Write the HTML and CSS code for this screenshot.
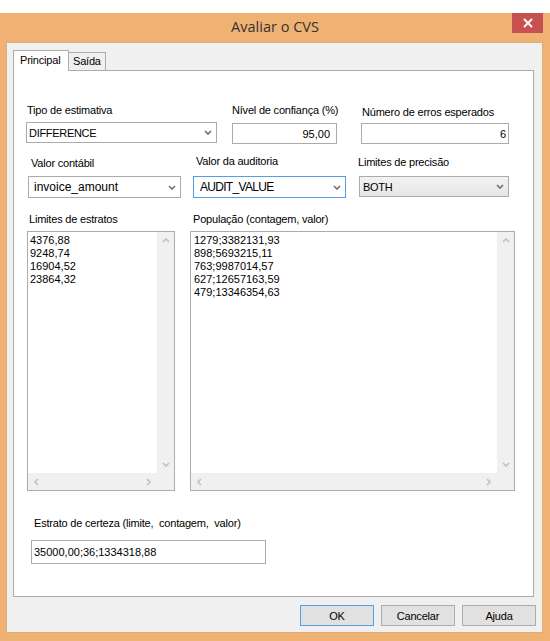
FILE: index.html
```html
<!DOCTYPE html>
<html lang="pt">
<head>
<meta charset="utf-8">
<title>Avaliar o CVS</title>
<link rel="stylesheet" href="styles.css">
</head>
<body>
<div class="topgap"></div>
<div class="window">
  <div class="titlebar">
    <div class="title">Avaliar o CVS</div>
    <div class="close">
      <svg width="10" height="10" viewBox="0 0 10 10"><path d="M1 1 L9 9 M9 1 L1 9" stroke="#fff" stroke-width="1.8" fill="none"/></svg>
    </div>
  </div>
  <div class="client">
    <div class="tabs">
      <div class="tab active">Principal</div>
      <div class="tab">Saída</div>
    </div>
    <div class="panel">
      <div class="row r1">
        <div class="field f1">
          <div class="label">Tipo de estimativa</div>
          <div class="combo c1"><span class="val v-caps">DIFFERENCE</span><span class="arrow"><svg width="8" height="5" viewBox="0 0 8 5"><path d="M1 1 L4 4 L7 1" stroke="#6d6d6d" stroke-width="1.6" fill="none"/></svg></span></div>
        </div>
        <div class="field f2">
          <div class="label">Nível de confiança (%)</div>
          <div class="input num n1">95,00</div>
        </div>
        <div class="field f3">
          <div class="label">Número de erros esperados</div>
          <div class="input num n2">6</div>
        </div>
      </div>
      <div class="row r2">
        <div class="field g1">
          <div class="label">Valor contábil</div>
          <div class="combo c2"><span class="val v-big">invoice_amount</span><span class="arrow"><svg width="8" height="5" viewBox="0 0 8 5"><path d="M1 1 L4 4 L7 1" stroke="#6d6d6d" stroke-width="1.6" fill="none"/></svg></span></div>
        </div>
        <div class="field g2">
          <div class="label">Valor da auditoria</div>
          <div class="combo c2 focus"><span class="val v-audit">AUDIT_VALUE</span><span class="arrow"><svg width="8" height="5" viewBox="0 0 8 5"><path d="M1 1 L4 4 L7 1" stroke="#6d6d6d" stroke-width="1.6" fill="none"/></svg></span></div>
        </div>
        <div class="field g3">
          <div class="label">Limites de precisão</div>
          <div class="combo c3 readonly"><span class="val v-caps">BOTH</span><span class="arrow"><svg width="8" height="5" viewBox="0 0 8 5"><path d="M1 1 L4 4 L7 1" stroke="#6d6d6d" stroke-width="1.6" fill="none"/></svg></span></div>
        </div>
      </div>
      <div class="row r3">
        <div class="field h1">
          <div class="label">Limites de estratos</div>
          <div class="listbox">
            <div class="items">
              <div>4376,88</div>
              <div>9248,74</div>
              <div>16904,52</div>
              <div>23864,32</div>
            </div>
            <div class="vscroll">
              <span class="sbtn"><svg width="8" height="5" viewBox="0 0 8 5"><path d="M1 4 L4 1 L7 4" stroke="#c2c2c2" stroke-width="1.7" fill="none"/></svg></span>
              <span class="sbtn"><svg width="8" height="5" viewBox="0 0 8 5"><path d="M1 1 L4 4 L7 1" stroke="#c2c2c2" stroke-width="1.7" fill="none"/></svg></span>
            </div>
            <div class="hscroll">
              <span class="sbtn"><svg width="5" height="8" viewBox="0 0 5 8"><path d="M4 1 L1 4 L4 7" stroke="#c2c2c2" stroke-width="1.7" fill="none"/></svg></span>
              <span class="sbtn"><svg width="5" height="8" viewBox="0 0 5 8"><path d="M1 1 L4 4 L1 7" stroke="#c2c2c2" stroke-width="1.7" fill="none"/></svg></span>
            </div>
            <div class="corner"></div>
          </div>
        </div>
        <div class="field h2">
          <div class="label">População (contagem, valor)</div>
          <div class="listbox">
            <div class="items wide">
              <div>1279;3382131,93</div>
              <div>898;5693215,11</div>
              <div>763;9987014,57</div>
              <div>627;12657163,59</div>
              <div>479;13346354,63</div>
            </div>
            <div class="vscroll">
              <span class="sbtn"><svg width="8" height="5" viewBox="0 0 8 5"><path d="M1 4 L4 1 L7 4" stroke="#c2c2c2" stroke-width="1.7" fill="none"/></svg></span>
              <span class="sbtn"><svg width="8" height="5" viewBox="0 0 8 5"><path d="M1 1 L4 4 L7 1" stroke="#c2c2c2" stroke-width="1.7" fill="none"/></svg></span>
            </div>
            <div class="hscroll">
              <span class="sbtn"><svg width="5" height="8" viewBox="0 0 5 8"><path d="M4 1 L1 4 L4 7" stroke="#c2c2c2" stroke-width="1.7" fill="none"/></svg></span>
              <span class="sbtn"><svg width="5" height="8" viewBox="0 0 5 8"><path d="M1 1 L4 4 L1 7" stroke="#c2c2c2" stroke-width="1.7" fill="none"/></svg></span>
            </div>
            <div class="corner"></div>
          </div>
        </div>
      </div>
      <div class="row r4">
        <div class="field k1">
          <div class="label pre">Estrato de certeza (limite,  contagem,  valor)</div>
          <div class="input text">35000,00;36;1334318,88</div>
        </div>
      </div>
    </div>
    <div class="buttons">
      <div class="btn default">OK</div>
      <div class="btn">Cancelar</div>
      <div class="btn">Ajuda</div>
    </div>
  </div>
</div>
</body>
</html>
```

FILE: styles.css
```css
* { box-sizing: border-box; }
html, body { margin: 0; padding: 0; background: #ffffff; }
body {
  font-family: "Liberation Sans", Arial, sans-serif;
  font-size: 11px;
  color: #000;
  width: 550px;
  height: 641px;
  overflow: hidden;
}
.topgap { height: 13px; }
.window {
  width: 550px;
  height: 628px;
  background: #f0b273;
  display: flex;
  flex-direction: column;
}
.titlebar {
  height: 29px;
  display: grid;
  grid-template-columns: 1fr auto 1fr;
  align-items: start;
}
.title {
  grid-column: 2;
  font-family: "Open Sans", "Noto Sans", sans-serif;
  font-size: 14.5px;
  color: #333;
  line-height: 29px;
  margin-top: -1px;
}
.close {
  grid-column: 3;
  justify-self: end;
  margin-right: 7px;
  width: 31px;
  height: 20px;
  background: #c75050;
  display: flex;
  align-items: center;
  justify-content: center;
}
.client {
  margin-left: 6px;
  width: 537px;
  height: 591px;
  background: #f0f0f0;
  border: 1px solid #dcae7f;
  padding: 7px 0 0 6px;
  display: flex;
  flex-direction: column;
}
.tabs {
  display: flex;
  align-items: flex-end;
  height: 20px;
  letter-spacing: -0.2px;
}
.tab {
  height: 18px;
  border: 1px solid #acacac;
  border-bottom: none;
  border-left: none;
  background: #f0f0f0;
  line-height: 13px;
  padding: 2px 0 0 4px;
  width: 37px;
}
.tab.active {
  height: 21px;
  width: 56px;
  border-left: 1px solid #acacac;
  background: #fff;
  margin-bottom: -1px;
  padding: 3px 0 0 6px;
  position: relative;
  z-index: 1;
}
.panel {
  width: 521px;
  height: 527px;
  background: #fff;
  border: 1px solid #acacac;
  display: flex;
  flex-direction: column;
}
.row { display: flex; align-items: flex-start; }
.field { display: flex; flex-direction: column; }
.label { height: 13px; line-height: 13px; white-space: nowrap; letter-spacing: -0.2px; }
.pre { white-space: pre; }

.combo {
  display: flex;
  align-items: center;
  border: 1px solid #ababab;
  background: #fff;
  padding-left: 2px;
}
.combo .val { flex: 1; white-space: nowrap; }
.combo .arrow { width: 17px; display: flex; justify-content: center; align-items: center; }
.combo.focus { border-color: #569de5; }
.combo.readonly { background: linear-gradient(#f2f2f2, #e6e6e6); border-color: #acacac; }
.v-caps { font-size: 11px; letter-spacing: -0.3px; }
.v-big { font-size: 12px; }
.v-audit { font-size: 12px; letter-spacing: -0.7px; padding-left: 4px; }

.input {
  display: flex;
  align-items: center;
  border: 1px solid #ababab;
  background: #fff;
  white-space: nowrap;
}
.num { justify-content: flex-end; }

/* row 1 */
.r1 { margin-top: 33px; height: 41px; }
.f1 { margin-left: 12px; width: 191px; }
.f1 .label { padding-left: 1px; }
.f1 .combo { margin-top: 5px; height: 21px; }
.f2 { margin-left: 15px; width: 105px; }
.f2 .input { margin-top: 6px; height: 21px; padding-right: 6px; }
.f3 { margin-left: 24px; width: 148px; padding-top: 2px; }
.f3 .label { padding-left: 1px; }
.f3 .input { margin-top: 4px; height: 21px; padding-right: 2px; }

/* row 2 */
.r2 { margin-top: 10px; height: 44px; }
.g1 { margin-left: 14px; width: 153px; }
.g1 .label { margin-top: 2px; padding-left: 3px; }
.g1 .combo { margin-top: 6px; height: 22px; padding-left: 5px; }
.g2 { margin-left: 12px; width: 153px; }
.g2 .label { padding-left: 3px; }
.g2 .combo { margin-top: 8px; height: 22px; padding-left: 2px; }
.g3 { margin-left: 13px; width: 150px; }
.g3 .label { margin-top: 1px; margin-left: -1px; }
.g3 .combo { margin-top: 7px; height: 21px; padding-left: 3px; }

/* row 3 */
.r3 { margin-top: 14px; height: 278px; }
.h1 { margin-left: 13px; width: 148px; }
.h1 .label { padding-left: 2px; }
.h2 { margin-left: 15px; width: 325px; }
.h2 .label { padding-left: 3px; }
.listbox {
  margin-top: 5px;
  height: 260px;
  border: 1px solid #acacac;
  background: #fff;
  display: grid;
  grid-template-columns: 1fr 17px;
  grid-template-rows: 1fr 17px;
}
.items { padding: 2px 0 0 2px; line-height: 13px; overflow: hidden; }
.items.wide { padding-left: 3px; }
.vscroll {
  background: #f0f0f0;
  display: flex;
  flex-direction: column;
  justify-content: space-between;
}
.hscroll {
  background: #f0f0f0;
  display: flex;
  justify-content: space-between;
}
.corner { background: #f0f0f0; }
.sbtn { width: 17px; height: 17px; display: flex; align-items: center; justify-content: center; }

/* row 4 */
.r4 { margin-top: 26px; }
.k1 { margin-left: 17px; width: 235px; }
.k1 .label { padding-left: 3px; }
.k1 .input { margin-top: 10px; height: 24px; padding-left: 2px; }

/* buttons */
.buttons {
  display: flex;
  justify-content: flex-end;
  gap: 7px;
  margin-top: 8px;
  padding-right: 6px;
}
.btn {
  width: 74px;
  height: 21px;
  background: #e1e1e1;
  border: 1px solid #adadad;
  display: flex;
  align-items: center;
  justify-content: center;
  letter-spacing: -0.2px;
}
.btn.default { border-color: #569de5; }
```
